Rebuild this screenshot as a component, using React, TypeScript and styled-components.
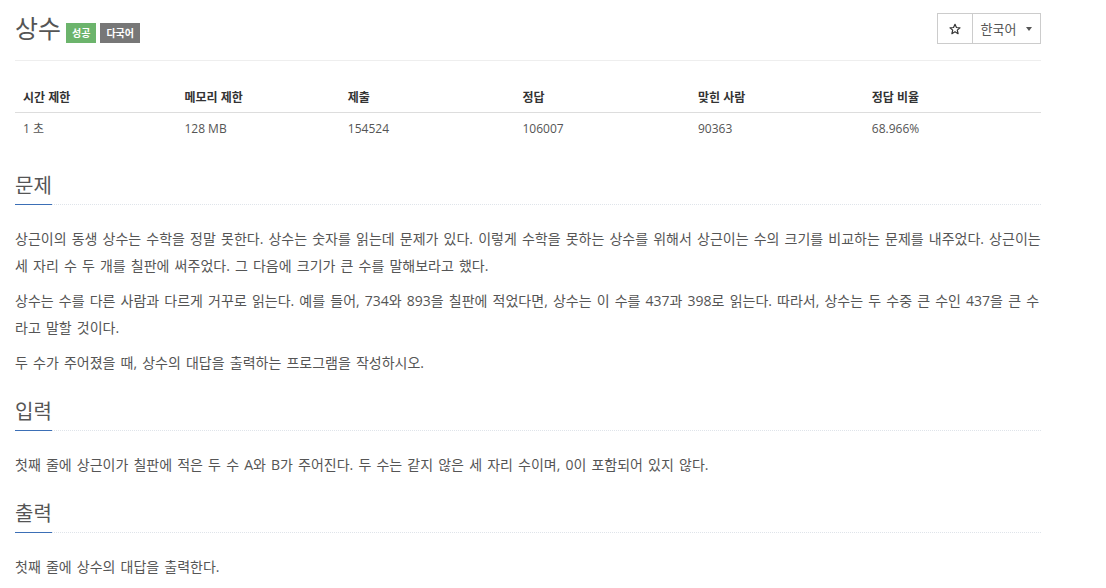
import styled, { createGlobalStyle } from "styled-components";

const GlobalStyle = createGlobalStyle`
    body {
        margin: 0;
        background: #fff;
        font-family: "Open Sans", "Noto Sans CJK KR", sans-serif;
        color: #555;
    }
`;

const Page = styled.div`
    width: 1026px;
    padding: 0 15px;
`;

const Header = styled.div`
    display: flex;
    align-items: flex-start;
    justify-content: space-between;
    padding-top: 13px;
    height: 47px;
    border-bottom: 1px solid #eee;
`;

const TitleWrap = styled.div`
    display: flex;
    align-items: flex-start;
    gap: 4px;
`;

const Title = styled.h1`
    margin: 0 1px 0 0;
    font-size: 25px;
    font-weight: 400;
    line-height: 30px;
    color: #555;
`;

const Label = styled.span<{ $color: string }>`
    display: inline-block;
    background: ${(p) => p.$color};
    color: #fff;
    font-size: 10px;
    font-weight: 700;
    line-height: 20px;
    padding: 0 6px;
    margin-top: 10px;
`;

const ButtonGroup = styled.div`
    display: flex;
`;

const Button = styled.button<{ $width: number }>`
    width: ${(p) => p.$width}px;
    height: 31px;
    display: flex;
    align-items: center;
    justify-content: center;
    gap: 10px;
    border: 1px solid #ccc;
    background: #fff;
    color: #555;
    font-family: inherit;
    font-size: 13px;
    padding: 0;
    & + & {
        margin-left: -1px;
    }
`;

const Caret = styled.span`
    width: 0;
    height: 0;
    border-left: 3.5px solid transparent;
    border-right: 3.5px solid transparent;
    border-top: 4px solid #555;
    margin-top: 1px;
`;

const Table = styled.table`
    width: 100%;
    border-collapse: collapse;
    margin: 21px 0 29px;
    font-size: 12px;
`;

const Th = styled.th<{ $width: number }>`
    width: ${(p) => p.$width}px;
    text-align: left;
    padding: 7px 8px 6px;
    line-height: 17px;
    color: #333;
    font-weight: 700;
    border-bottom: 1px solid #ddd;
`;

const Td = styled.td`
    padding: 7px 8px 8px;
    line-height: 17px;
    color: #555;
`;

const Section = styled.section`
    margin-top: 24px;
`;

const Headline = styled.div`
    border-bottom: 1px dotted #dfe4ea;
    margin-bottom: 20px;
`;

const HeadTitle = styled.h2`
    display: inline-block;
    margin: 0 0 -1px;
    padding-bottom: 6px;
    font-size: 20px;
    font-weight: 400;
    line-height: 24px;
    color: #555;
    border-bottom: 1px solid #3b6fb6;
`;

const Paragraph = styled.p`
    margin: 0 0 8px;
    font-size: 14px;
    line-height: 27px;
    word-spacing: 1.5px;
    word-break: break-all;
    color: #555;
`;

const StarIcon = () => (
    <svg width="12" height="12" viewBox="0 0 24 24" fill="none" stroke="#333" strokeWidth="2.4" strokeLinejoin="round">
        <polygon points="12,2.5 14.9,9 22,9.6 16.6,14.3 18.2,21.3 12,17.6 5.8,21.3 7.4,14.3 2,9.6 9.1,9" />
    </svg>
);

const heads = [
    { name: "시간 제한", w: 163 },
    { name: "메모리 제한", w: 164 },
    { name: "제출", w: 174 },
    { name: "정답", w: 175 },
    { name: "맞힌 사람", w: 174 },
    { name: "정답 비율", w: 176 },
];
const values = ["1 초", "128 MB", "154524", "106007", "90363", "68.966%"];

export default function App() {
    return (
        <Page>
            <GlobalStyle />
            <Header>
                <TitleWrap>
                    <Title>상수</Title>
                    <Label $color="#6cb46c">성공</Label>
                    <Label $color="#777">다국어</Label>
                </TitleWrap>
                <ButtonGroup>
                    <Button $width={36}>
                        <StarIcon />
                    </Button>
                    <Button $width={69}>
                        한국어 <Caret />
                    </Button>
                </ButtonGroup>
            </Header>

            <Table>
                <thead>
                    <tr>
                        {heads.map((h) => (
                            <Th key={h.name} $width={h.w}>
                                {h.name}
                            </Th>
                        ))}
                    </tr>
                </thead>
                <tbody>
                    <tr>
                        {values.map((v) => (
                            <Td key={v}>{v}</Td>
                        ))}
                    </tr>
                </tbody>
            </Table>

            <Section>
                <Headline>
                    <HeadTitle>문제</HeadTitle>
                </Headline>
                <Paragraph>
                    상근이의 동생 상수는 수학을 정말 못한다. 상수는 숫자를 읽는데 문제가 있다. 이렇게 수학을 못하는 상수를 위해서 상근이는 수의 크기를 비교하는 문제를 내주었다. 상근이는 세 자리 수 두 개를 칠판에 써주었다. 그 다음에 크기가 큰 수를 말해보라고 했다.
                </Paragraph>
                <Paragraph>
                    상수는 수를 다른 사람과 다르게 거꾸로 읽는다. 예를 들어, 734와 893을 칠판에 적었다면, 상수는 이 수를 437과 398로 읽는다. 따라서, 상수는 두 수중 큰 수인 437을 큰 수라고 말할 것이다.
                </Paragraph>
                <Paragraph>두 수가 주어졌을 때, 상수의 대답을 출력하는 프로그램을 작성하시오.</Paragraph>
            </Section>

            <Section>
                <Headline>
                    <HeadTitle>입력</HeadTitle>
                </Headline>
                <Paragraph>첫째 줄에 상근이가 칠판에 적은 두 수 A와 B가 주어진다. 두 수는 같지 않은 세 자리 수이며, 0이 포함되어 있지 않다.</Paragraph>
            </Section>

            <Section>
                <Headline>
                    <HeadTitle>출력</HeadTitle>
                </Headline>
                <Paragraph>첫째 줄에 상수의 대답을 출력한다.</Paragraph>
            </Section>
        </Page>
    );
}
